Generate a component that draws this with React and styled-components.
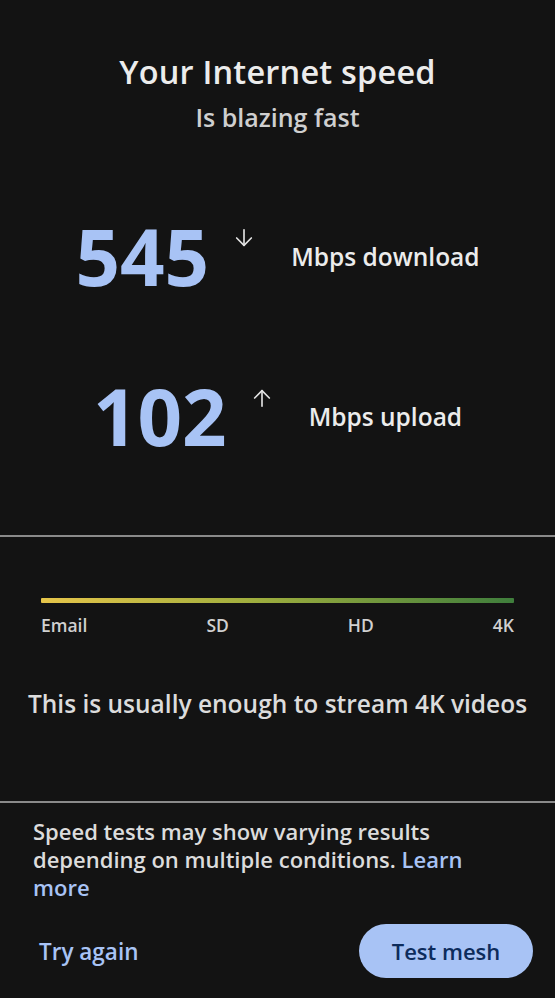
import styled, { createGlobalStyle } from 'styled-components';

const GlobalStyle = createGlobalStyle`
    html, body {
        margin: 0;
        padding: 0;
        background: #131313;
    }
    body {
        font-family: "Open Sans", Roboto, sans-serif;
        color: #e3e3e3;
    }
`

const speeds = [
    { value: '545', dir: 'down', label: 'Mbps download' },
    { value: '102', dir: 'up', label: 'Mbps upload' },
];

const marks = ['Email', 'SD', 'HD', '4K'];

const Arrow = ({ dir }) => (
    <svg width="22" height="22" viewBox="0 0 24 24" fill="none" stroke="#e3e3e3" strokeWidth="1.8" strokeLinecap="round" strokeLinejoin="round">
        {dir === 'down' ? (
            <>
                <path d="M12 3v17" />
                <path d="M4 12l8 8 8-8" />
            </>
        ) : (
            <>
                <path d="M12 21V4" />
                <path d="M4 12l8-8 8 8" />
            </>
        )}
    </svg>
);

const App = () => {
    return (
        <>
            <GlobalStyle />
            <Screen>
                <Top>
                    <Title>Your Internet speed</Title>
                    <Subtitle>Is blazing fast</Subtitle>
                    <Speeds>
                        {speeds.map((s) => (
                            <SpeedRow key={s.value}>
                                <Value>{s.value}</Value>
                                <ArrowBox><Arrow dir={s.dir} /></ArrowBox>
                                <Unit>{s.label}</Unit>
                            </SpeedRow>
                        ))}
                    </Speeds>
                </Top>

                <Quality>
                    <Bar />
                    <Marks>
                        {marks.map((m) => <Mark key={m}>{m}</Mark>)}
                    </Marks>
                    <Verdict>This is usually enough to stream 4K videos</Verdict>
                </Quality>

                <Footer>
                    <Note>
                        Speed tests may show varying results depending on multiple conditions. <Link>Learn more</Link>
                    </Note>
                    <Actions>
                        <TextButton>Try again</TextButton>
                        <PillButton>Test mesh</PillButton>
                    </Actions>
                </Footer>
            </Screen>
        </>
    )
}

export default App;

const Screen = styled.div`
    width: 555px;
    height: 998px;
    display: flex;
    flex-direction: column;
    background: #131313;
    overflow: hidden;
`

const Top = styled.div`
    height: 537px;
    box-sizing: border-box;
    padding-top: 50px;
    display: flex;
    flex-direction: column;
    align-items: center;
    border-bottom: 2px solid #8a8a8a;
`

const Title = styled.h1`
    margin: 0;
    font-size: 32.5px;
    line-height: 44px;
    font-weight: 600;
    color: #ececec;
    letter-spacing: 0.2px;
`

const Subtitle = styled.h2`
    margin: 8px 0 0;
    font-size: 25px;
    line-height: 30px;
    font-weight: 600;
    color: #cfcfcf;
`

const Speeds = styled.div`
    margin-top: 72px;
    display: flex;
    flex-direction: column;
    align-items: center;
    gap: 56px;
`

const SpeedRow = styled.div`
    display: flex;
    align-items: center;
`

const Value = styled.span`
    font-size: 78px;
    line-height: 104px;
    font-weight: 700;
    color: #a8c3f5;
`

const ArrowBox = styled.span`
    align-self: flex-start;
    margin: 23px 36px 0 24px;
    display: flex;
`

const Unit = styled.span`
    font-size: 24.5px;
    font-weight: 600;
    color: #ececec;
`

const Quality = styled.div`
    height: 266px;
    box-sizing: border-box;
    padding: 61px 24px 0;
    border-bottom: 2px solid #8a8a8a;
    display: flex;
    flex-direction: column;
`

const Bar = styled.div`
    margin: 0 17px;
    height: 5px;
    border-radius: 1px;
    background: linear-gradient(to right, #e6c54a, #9fae3e 45%, #3f7e3c);
`

const Marks = styled.div`
    margin: 10px 17px 0;
    display: flex;
    justify-content: space-between;
`

const Mark = styled.span`
    font-size: 17.5px;
    font-weight: 600;
    color: #d0d0d0;
`

const Verdict = styled.p`
    margin: 50px 0 0;
    text-align: center;
    font-size: 24.5px;
    font-weight: 600;
    color: #dcdcdc;
    white-space: nowrap;
`

const Footer = styled.div`
    flex: 1;
    padding: 14px 22px 0 33px;
    display: flex;
    flex-direction: column;
`

const Note = styled.p`
    margin: 0;
    max-width: 450px;
    font-size: 22px;
    line-height: 28px;
    font-weight: 600;
    color: #dcdcdc;
`

const Link = styled.span`
    color: #a8c3f5;
`

const Actions = styled.div`
    margin-top: 23px;
    display: flex;
    justify-content: space-between;
    align-items: center;
`

const TextButton = styled.button`
    background: none;
    border: none;
    padding: 0 0 0 6px;
    font-family: inherit;
    font-size: 22.5px;
    font-weight: 600;
    color: #a8c3f5;
`

const PillButton = styled.button`
    width: 174px;
    height: 54px;
    border: none;
    border-radius: 27px;
    background: #a8c3f5;
    font-family: inherit;
    font-size: 22px;
    font-weight: 600;
    color: #0d2c5c;
`
